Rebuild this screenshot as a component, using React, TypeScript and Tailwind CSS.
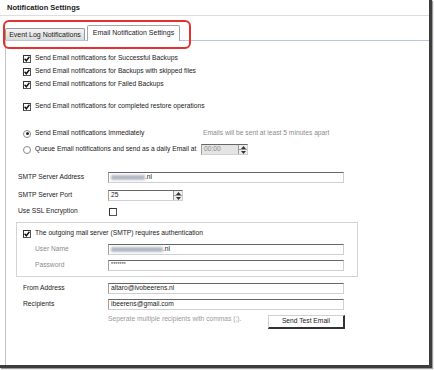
import React from "react";

function CheckBox({ checked = false }: { checked?: boolean }) {
  return (
    <span className="flex h-[8px] w-[8px] shrink-0 items-center justify-center border border-[#555] border-l-[#333] border-t-[#333] bg-white">
      {checked && (
        <svg width="6" height="6" viewBox="0 0 6 6">
          <path d="M0.6 2.8 L2.3 4.8 L5.4 0.8" fill="none" stroke="#111" strokeWidth="1.4" />
        </svg>
      )}
    </span>
  );
}

function Radio({ checked = false }: { checked?: boolean }) {
  return (
    <span className="flex h-[8px] w-[8px] shrink-0 items-center justify-center rounded-full border border-[#8a8a8a] bg-white">
      {checked && <span className="h-[3px] w-[3px] rounded-full bg-[#222]" />}
    </span>
  );
}

function Spin() {
  return (
    <div className="ml-auto flex h-full w-[9px] flex-col border-l border-[#9a9a9a] bg-[#eeeeee]">
      <div className="flex flex-1 items-center justify-center border-b border-[#9a9a9a]">
        <svg width="5" height="3" viewBox="0 0 5 3">
          <path d="M0 3 L2.5 0 L5 3Z" fill="#333" />
        </svg>
      </div>
      <div className="flex flex-1 items-center justify-center">
        <svg width="5" height="3" viewBox="0 0 5 3">
          <path d="M0 0 L2.5 3 L5 0Z" fill="#333" />
        </svg>
      </div>
    </div>
  );
}

function TextBox({ className = "", children }: { className?: string; children?: React.ReactNode }) {
  return (
    <div
      className={`flex h-[11px] items-center border border-[#d0d0d0] border-l-[#a0a0a0] border-t-[#666] bg-white pl-[2px] ${className}`}
    >
      {children}
    </div>
  );
}

function Blurred({ w }: { w: string }) {
  return <span className={`h-[5px] ${w} bg-[#b2b8c4] blur-[1.2px]`} />;
}

export default function App() {
  return (
    <div className="relative h-[370px] w-[434px] bg-white font-['Liberation_Sans',Arial,sans-serif] text-[6.7px] leading-none text-[#1a1a1a]">
      <div className="flex h-[368px] w-[432px] flex-col border-b-[3px] border-r-[3px] border-[#3d3d3d] shadow-[1px_1px_1px_#9a9a9a]">
        <div className="flex h-[16px] items-center border-b border-[#dedede] pl-[7px] text-[7.5px] font-bold">
          Notification Settings
        </div>

        <div className="flex h-[24px] items-end pl-[5px]">
          <div className="flex h-[12px] w-[80px] items-center justify-center rounded-t-[2px] border border-b-0 border-[#9a9a9a] bg-gradient-to-b from-[#f4f4f4] to-[#dadada] text-[7px]">
            Event Log Notifications
          </div>
          <div className="relative z-10 -mb-px ml-[2px] flex h-[16px] w-[93px] items-center justify-center rounded-t-[2px] border border-b-0 border-[#a6a6a6] bg-white pb-[2px] text-[7px]">
            Email Notification Settings
          </div>
        </div>

        <div className="ml-[5px] flex flex-1 flex-col border-l border-t border-[#b9c6d3] border-l-[#c4c4c4] pt-[11px]">
          <div className="flex h-[13px] items-center pl-[17px]">
            <CheckBox checked />
            <span className="ml-[4px]">Send Email notifications for Successful Backups</span>
          </div>
          <div className="flex h-[13px] items-center pl-[17px]">
            <CheckBox checked />
            <span className="ml-[4px]">Send Email notifications for Backups with skipped files</span>
          </div>
          <div className="flex h-[13px] items-center pl-[17px]">
            <CheckBox checked />
            <span className="ml-[4px]">Send Email notifications for Failed Backups</span>
          </div>
          <div className="mt-[9px] flex h-[13px] items-center pl-[17px]">
            <CheckBox checked />
            <span className="ml-[4px]">Send Email notifications for completed restore operations</span>
          </div>

          <div className="mt-[14px] flex h-[13px] items-center pl-[17px]">
            <Radio checked />
            <span className="ml-[4px] w-[168px]">Send Email notifications Immediately</span>
            <span className="text-[#8c8c8c]">Emails will be sent at least 5 minutes apart</span>
          </div>
          <div className="mt-[3px] flex h-[13px] items-center pl-[17px]">
            <Radio />
            <span className="ml-[4px] w-[166px]">Queue Email notifications and send as a daily Email at</span>
            <TextBox className="w-[47px] !bg-[#e4e4e4] text-[#8c8c8c]">
              <span>00:00</span>
              <Spin />
            </TextBox>
          </div>

          <div className="mt-[15px] flex h-[13px] items-center pl-[12px]">
            <span className="w-[90px]">SMTP Server Address</span>
            <TextBox className="w-[236px]">
              <Blurred w="w-[34px]" />
              <span>.nl</span>
            </TextBox>
          </div>
          <div className="mt-[5px] flex h-[13px] items-center pl-[12px]">
            <span className="w-[90px]">SMTP Server Port</span>
            <TextBox className="w-[75px]">
              <span>25</span>
              <Spin />
            </TextBox>
          </div>
          <div className="mt-[3px] flex h-[13px] items-center pl-[12px]">
            <span className="w-[91px]">Use SSL Encryption</span>
            <CheckBox />
          </div>

          <div className="ml-[10px] mt-[4px] w-[342px] border border-[#d4d4d4] pb-[4px] pt-[4px]">
            <div className="flex h-[13px] items-center pl-[6px]">
              <CheckBox checked />
              <span className="ml-[4px]">The outgoing mail server (SMTP) requires authentication</span>
            </div>
            <div className="mt-[3px] flex h-[13px] items-center pl-[18px]">
              <span className="w-[73px] text-[#8c8c8c]">User Name</span>
              <TextBox className="w-[236px]">
                <Blurred w="w-[52px]" />
                <span>.nl</span>
              </TextBox>
            </div>
            <div className="mt-[3px] flex h-[13px] items-center pl-[18px]">
              <span className="w-[73px] text-[#8c8c8c]">Password</span>
              <TextBox className="w-[236px]">
                <span className="self-start pt-[1px] text-[5px] tracking-[0.2px]">*******</span>
              </TextBox>
            </div>
          </div>

          <div className="mt-[5px] flex h-[13px] items-center pl-[17px]">
            <span className="w-[85px]">From Address</span>
            <TextBox className="w-[236px]">altaro@ivobeerens.nl</TextBox>
          </div>
          <div className="mt-[3px] flex h-[13px] items-center pl-[17px]">
            <span className="w-[85px]">Recipients</span>
            <TextBox className="w-[236px]">ibeerens@gmail.com</TextBox>
          </div>
          <div className="mt-[3px] flex h-[16px] items-center pl-[102px]">
            <span className="w-[160px] self-start pt-[2px] text-[#9a9a9a]">
              Seperate multiple recipients with commas (;).
            </span>
            <button className="flex h-[14px] w-[77px] items-center justify-center border border-[#d0d0d0] border-b-2 border-r-2 border-b-[#333] border-r-[#333] bg-white text-[6.7px]">
              Send Test Email
            </button>
          </div>
        </div>
      </div>

      <div className="pointer-events-none absolute left-[3px] top-[20px] h-[29px] w-[188px] rounded-[6px] border-2 border-[#e2312f]" />
    </div>
  );
}
